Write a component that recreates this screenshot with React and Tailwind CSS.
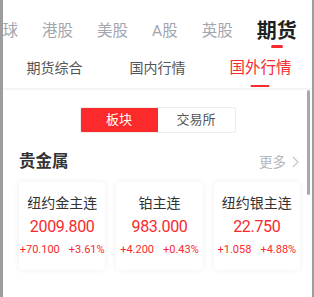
const RED = 'text-[#f72a2e]';

function TopTabs() {
  const tabs = ['全球', '港股', '美股', 'A股', '英股'];
  return (
    <div className="h-[52px] overflow-hidden">
      <div className="flex items-center h-[42px] mt-[10px] gap-[24px] ml-[-16px]">
        {tabs.map((t) => (
          <span key={t} className="text-[15.5px] leading-[22px] text-[#a3a6b0] whitespace-nowrap">
            {t}
          </span>
        ))}
        <span className="relative text-[20px] leading-[28px] font-bold text-[#1f1f1f] whitespace-nowrap">
          期货
          <span className="absolute top-full left-1/2 -translate-x-1/2 w-[12px] h-[3px] rounded-full bg-[#f72a2e]" />
        </span>
      </div>
    </div>
  );
}

function SubTabs() {
  return (
    <div className="grid grid-cols-3 h-[37px] border-b border-[#f2f2f2] shadow-[0_1px_2px_rgba(0,0,0,0.04)]">
      <div className="flex justify-center pt-[6px]">
        <span className="text-[14px] leading-[20px] text-[#555]">期货综合</span>
      </div>
      <div className="flex justify-center pt-[6px]">
        <span className="text-[14px] leading-[20px] text-[#555]">国内行情</span>
      </div>
      <div className="flex justify-center pt-[4px]">
        <span className={`relative text-[15.5px] leading-[24px] ${RED}`}>
          国外行情
          <span className="absolute top-[29px] left-1/2 -translate-x-1/2 w-[19px] h-[2px] rounded-full bg-[#f72a2e]" />
        </span>
      </div>
    </div>
  );
}

function Card({ name, price, change, pct }) {
  return (
    <div className="h-[88px] rounded-[4px] bg-white shadow-[0_0_6px_rgba(0,0,0,0.07)] flex flex-col items-center">
      <div className="mt-[11px] text-[14px] leading-[20px] text-[#333]">{name}</div>
      <div className={`mt-[3px] text-[16px] leading-[22px] tracking-[-0.3px] ${RED}`}>{price}</div>
      <div className={`mt-[5px] flex gap-[9px] text-[11px] leading-[14px] ${RED}`}>
        <span>{change}</span>
        <span>{pct}</span>
      </div>
    </div>
  );
}

export default function App() {
  return (
    <div
      className="relative w-[314px] h-[297px] flex bg-white overflow-hidden"
      style={{ fontFamily: 'Roboto, "Noto Sans CJK SC", sans-serif' }}
    >
      <div className="w-[3px] bg-[#9d9d9d]" />
      <div className="flex-1 min-w-0 flex flex-col">
        <TopTabs />
        <SubTabs />

        <div className="flex justify-center mt-[18px]">
          <div className="flex w-[156px] h-[26px] rounded-[2px] overflow-hidden border border-[#ececec]">
            <div className="flex-1 bg-[#fc2a2a] flex items-center justify-center text-[13px] text-white">板块</div>
            <div className="flex-1 bg-white flex items-center justify-center text-[13px] text-[#555]">交易所</div>
          </div>
        </div>

        <div className="flex items-center justify-between pl-[16px] pr-[13px] mt-[16px] h-[26px]">
          <span className="text-[16.5px] font-bold text-[#333]">贵金属</span>
          <span className="flex items-center gap-[6px] text-[13.5px] text-[#b3b6bd]">
            更多
            <svg width="7" height="12" viewBox="0 0 7 12" fill="none">
              <path d="M1 1l5 5-5 5" stroke="#c3c5ca" strokeWidth="1.2" />
            </svg>
          </span>
        </div>

        <div className="grid grid-cols-3 gap-[11px] pl-[16px] pr-[12px] mt-[7px]">
          <Card name="纽约金主连" price="2009.800" change="+70.100" pct="+3.61%" />
          <Card name="铂主连" price="983.000" change="+4.200" pct="+0.43%" />
          <Card name="纽约银主连" price="22.750" change="+1.058" pct="+4.88%" />
        </div>
      </div>
      <div className="w-[2px] bg-[#9d9d9d]" />
      <div className="absolute left-[307px] top-[90px] w-[3px] h-[105px] rounded-full bg-[#a9a9a9]" />
    </div>
  );
}
